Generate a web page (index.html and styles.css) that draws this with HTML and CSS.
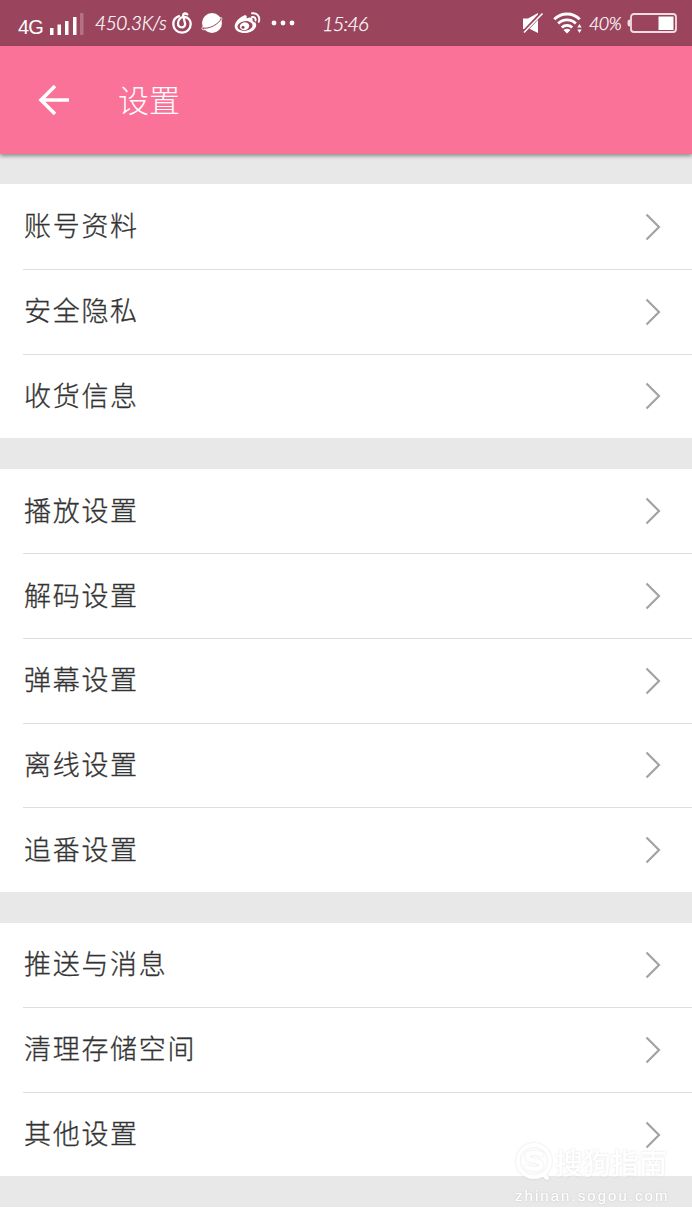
FILE: index.html
```html
<!DOCTYPE html>
<html lang="zh-CN">
<head>
<meta charset="utf-8">
<title>设置</title>
<link rel="stylesheet" href="styles.css">
</head>
<body>
<div class="status">
  <span class="network">4G</span>
  <svg class="signal" width="35" height="22" viewBox="0 0 35 22"><g fill="#fff"><path d="M1 15h3.500v7H1zM8.500 11.500H12V22H8.500zM16 8h3.500v14H16zM24 4h3.500v18H24z"/><path opacity=".25" d="M31 0h3.500v22H31z"/></g></svg>
  <span class="speed">450.3K/s</span>
  <svg class="music" width="20" height="22" viewBox="0 0 20 22" fill="none" stroke="#fff" stroke-width="2.300" stroke-linecap="round"><path d="M7 4.200C3.500 5.400 1.300 8.300 1.300 12c0 5 4 8.700 8.700 8.700s8.700-3.700 8.700-8.700c0-3.700-2.500-6.600-6.200-7C8.600 4.600 6 8 6 11.300c0 2.400 1.500 4 3.700 4 2.300 0 3.800-1.600 3.300-4L11.200 4c-.5-2.500 2-3.300 4-1.600"/></svg>
  <svg class="planet" width="22" height="22" viewBox="0 0 22 22"><circle cx="11" cy="11" r="10" fill="#fff"/><path d="M1.800 14.500Q0 17.500 2.500 17.700C8 18 19 11.500 20.700 7.500Q21.500 5.500 19.500 5.500" fill="none" stroke="#fff" stroke-width="1"/><path d="M1.500 16C8 17.500 18 12 20.300 6.500" fill="none" stroke="#9a455d" stroke-width="1"/></svg>
  <svg class="weibo" width="27" height="22" viewBox="0 0 27 22"><path fill="#fff" d="M10 3.500c2-.8 3.300.2 2.600 3 3-1.400 6.500-1.300 6 1.500-.2 1 0 1.200 1 1.700 2.400.9 3.100 2.700 2.300 5C20.500 18.500 16 21 11 21 5 21 .7 18.300.7 14.200.7 10 6 4.900 10 3.500z"/><ellipse cx="11" cy="14" rx="7.600" ry="4.800" fill="#9a455d" transform="rotate(-8 11 14)"/><ellipse cx="10.500" cy="14.200" rx="4.800" ry="3.900" fill="#fff" transform="rotate(-15 10.500 14.200)"/><circle cx="9" cy="15.300" r="1.500" fill="#9a455d"/><path d="M18 1.300c5-.8 8.500 3.500 6.800 8.500M18 5c2.500-.4 4 1.200 3.500 3.500" fill="none" stroke="#fff" stroke-width="1.900" stroke-linecap="round"/></svg>
  <svg class="more" width="24" height="6" viewBox="0 0 24 6" fill="#fff"><circle cx="3" cy="3" r="2.400"/><circle cx="12" cy="3" r="2.400"/><circle cx="21" cy="3" r="2.400"/></svg>
  <span class="clock">15:46</span>
  <svg class="mute" width="22" height="23" viewBox="0 0 22 23"><path fill="#fff" d="M1 6.500h5L16 1v20L8 17H1z"/><path d="M1 21L20 1" stroke="#9a455d" stroke-width="3.800"/><path d="M2 20.500L20.500 1.500" stroke="#fff" stroke-width="1.600"/></svg>
  <svg class="wifi" width="30" height="22" viewBox="0 0 30 22" fill="none" stroke="#fff" stroke-width="2.900"><path d="M1.300 7.300C8.300.2 19.700.2 26.700 7.300M5.200 11.500C10.200 6.600 17.800 6.600 22.800 11.500M8.800 15.500C11.800 12.700 16.200 12.700 19.200 15.500"/><path fill="#fff" stroke="none" d="M10.500 18c2-1.800 5-1.800 7 0L14 21.500zM24.300 15.500L26.500 12l2.200 3.500zM24.300 17.500h4.400L26.500 21z"/></svg>
  <span class="percent">40%</span>
  <svg class="battery" width="50" height="20" viewBox="0 0 50 20"><rect x="4" y="1" width="45" height="18" rx="3" fill="none" stroke="#f3dce2" stroke-width="1.800"/><path fill="#f3dce2" d="M3 6.500v7Q.5 13.500.5 11V9Q.5 6.500 3 6.500z"/><path fill="#fff" d="M31.500 3.500h15v13.500h-15z"/></svg>
</div>
<header class="bar">
  <svg class="back" width="32" height="32" viewBox="0 0 32 32" fill="none" stroke="#fff" stroke-width="3.600"><path d="M31 16H3M17 2L3 16l14 14"/></svg>
  <h1 class="title">设置</h1>
</header>
<main class="list">
  <section class="group">
    <div class="row"><span class="label">账号资料</span><svg class="arrow" viewBox="0 0 16 28"><path d="M1.500 1.500L14 14 1.500 26.500"/></svg></div>
    <div class="row"><span class="label">安全隐私</span><svg class="arrow" viewBox="0 0 16 28"><path d="M1.500 1.500L14 14 1.500 26.500"/></svg></div>
    <div class="row"><span class="label">收货信息</span><svg class="arrow" viewBox="0 0 16 28"><path d="M1.500 1.500L14 14 1.500 26.500"/></svg></div>
  </section>
  <section class="group">
    <div class="row"><span class="label">播放设置</span><svg class="arrow" viewBox="0 0 16 28"><path d="M1.500 1.500L14 14 1.500 26.500"/></svg></div>
    <div class="row"><span class="label">解码设置</span><svg class="arrow" viewBox="0 0 16 28"><path d="M1.500 1.500L14 14 1.500 26.500"/></svg></div>
    <div class="row"><span class="label">弹幕设置</span><svg class="arrow" viewBox="0 0 16 28"><path d="M1.500 1.500L14 14 1.500 26.500"/></svg></div>
    <div class="row"><span class="label">离线设置</span><svg class="arrow" viewBox="0 0 16 28"><path d="M1.500 1.500L14 14 1.500 26.500"/></svg></div>
    <div class="row"><span class="label">追番设置</span><svg class="arrow" viewBox="0 0 16 28"><path d="M1.500 1.500L14 14 1.500 26.500"/></svg></div>
  </section>
  <section class="group">
    <div class="row"><span class="label">推送与消息</span><svg class="arrow" viewBox="0 0 16 28"><path d="M1.500 1.500L14 14 1.500 26.500"/></svg></div>
    <div class="row"><span class="label">清理存储空间</span><svg class="arrow" viewBox="0 0 16 28"><path d="M1.500 1.500L14 14 1.500 26.500"/></svg></div>
    <div class="row"><span class="label">其他设置</span><svg class="arrow" viewBox="0 0 16 28"><path d="M1.500 1.500L14 14 1.500 26.500"/></svg></div>
  </section>
</main>
<div class="watermark">
  <div class="brand">
    <svg class="logo" width="38" height="40" viewBox="0 0 38 40" fill="none" stroke="#fff" stroke-linecap="round"><circle cx="19" cy="19" r="16" stroke-width="4"/><path d="M26 12.500C22 10 12.500 10 12.500 14.500c0 5.500 13.500 3 13.500 8.500 0 5-9.500 5-14 2" stroke-width="4.500"/><path d="M29 33l3 3" stroke-width="4"/></svg>
    <span class="brand-name">搜狗指南</span>
  </div>
  <span class="site">zhinan.sogou.com</span>
</div>
</body>
</html>
```
FILE: styles.css
```css
* { box-sizing: border-box; }
body {
  margin: 0;
  position: relative;
  width: 692px;
  height: 1230px;
  overflow: hidden;
  background: #fff;
  font-family: "Noto Sans CJK SC", sans-serif;
}
svg { display: block; flex: none; }
.status {
  display: flex;
  align-items: center;
  height: 46px;
  padding-left: 18px;
  background: #9a455d;
  color: #fff;
  white-space: nowrap;
}
.status span { flex: none; line-height: 24px; }
.network { width: 31px; font: 20px "Liberation Sans", sans-serif; letter-spacing: -.8px; padding-top: 7px; }
.signal { margin-top: 1px; }
.speed, .clock, .percent { font-family: Lato, sans-serif; font-style: italic; font-weight: 300; -webkit-text-stroke: .25px #fff; }
.speed { width: 76px; margin-left: 11px; font-size: 19px; letter-spacing: -.35px; }
.music { margin-left: 1px; }
.planet { margin-left: 9px; }
.weibo { margin-left: 11px; }
.more { margin-left: 10px; }
.clock { width: 50px; margin-left: 27px; font-size: 20px; letter-spacing: -.9px; }
.mute { margin-left: 150px; }
.wifi { margin-left: 9px; }
.percent { width: 36px; margin-left: 6px; font-size: 18px; letter-spacing: -.6px; }
.battery { margin-left: 2px; }
.bar {
  position: relative;
  display: flex;
  align-items: center;
  gap: 48px;
  height: 108px;
  padding-left: 38px;
  background: #fb7299;
  box-shadow: 0 2px 4px rgba(0, 0, 0, .4);
}
.title { margin: 0; padding-bottom: 3px; color: #fff; font-size: 31px; line-height: 40px; font-weight: 300; }
.list {
  display: flex;
  flex-direction: column;
  gap: 30.700px;
  padding: 30.400px 0 30.300px;
  background: #e8e8e8;
}
.group { background: #fff; padding-left: 23px; }
.row {
  display: flex;
  align-items: center;
  justify-content: space-between;
  height: 84.600px;
  padding-right: 30px;
}
.row + .row { border-top: 1px solid #dedede; }
.label { padding: 0 0 3px 1px; color: #333; font-size: 27px; line-height: 36px; font-weight: 300; letter-spacing: 1.700px; -webkit-text-stroke: .3px #333; }
.arrow { width: 16px; height: 28px; margin-right: 1px; fill: none; stroke: #a3a3a3; stroke-width: 2.200; }
.watermark {
  position: absolute;
  left: 515px;
  top: 1142px;
  width: 160px;
  color: #fff;
  filter: drop-shadow(0 0 1px rgba(0, 0, 0, .12));
}
.brand { display: flex; align-items: center; gap: 2px; height: 40px; }
.brand-name { font-size: 28px; line-height: 40px; font-weight: 500; }
.site { display: block; margin-top: 5px; font: 15px/18px "Liberation Sans", sans-serif; letter-spacing: 2.050px; }
```
